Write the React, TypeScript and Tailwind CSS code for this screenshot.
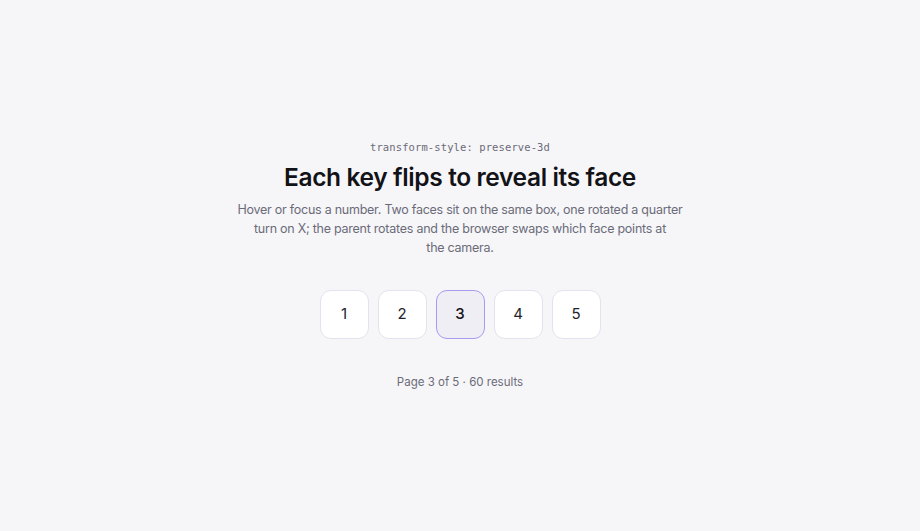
import { useState } from "react";

const pages = [1, 2, 3, 4, 5];

export default function App() {
  const [current, setCurrent] = useState(3);

  return (
    <main
      className="min-h-screen w-full bg-[#f6f6f9] flex flex-col items-center pt-[139px] text-center"
      style={{ fontFamily: "Inter, 'Noto Sans', sans-serif" }}
    >
      <p
        className="text-[10.5px] tracking-[0.01em] text-[#6b6b76] leading-[16px]"
        style={{ fontFamily: "'DejaVu Sans Mono', monospace" }}
      >
        transform-style: preserve-3d
      </p>
      <h1 className="mt-[5px] text-[24.5px] leading-[34px] font-semibold tracking-[-0.015em] text-[#121217]">
        Each key flips to reveal its face
      </h1>
      <p className="mt-[6px] max-w-[470px] text-[12.5px] leading-[19px] tracking-[-0.02em] text-[#6b6b78]">
        Hover or focus a number. Two faces sit on the same box, one rotated a quarter
        <br />
        turn on X; the parent rotates and the browser swaps which face points at
        <br />
        the camera.
      </p>

      <nav className="mt-[33px] flex gap-[9px]">
        {pages.map((n) => {
          const active = n === current;
          return (
            <button
              key={n}
              type="button"
              onClick={() => setCurrent(n)}
              className={
                active
                  ? "w-[49px] h-[49px] rounded-[11px] border border-[#a79bf0] bg-[#efeef5] text-[15px] font-medium text-[#121217] flex items-center justify-center"
                  : "w-[49px] h-[49px] rounded-[11px] border border-[#e4e2ee] bg-white text-[15px] text-[#24242b] flex items-center justify-center"
              }
            >
              {n}
            </button>
          );
        })}
      </nav>

      <p className="mt-[34px] text-[11.5px] leading-[18px] text-[#6b6b78]">
        Page {current} of 5 · 60 results
      </p>
    </main>
  );
}
